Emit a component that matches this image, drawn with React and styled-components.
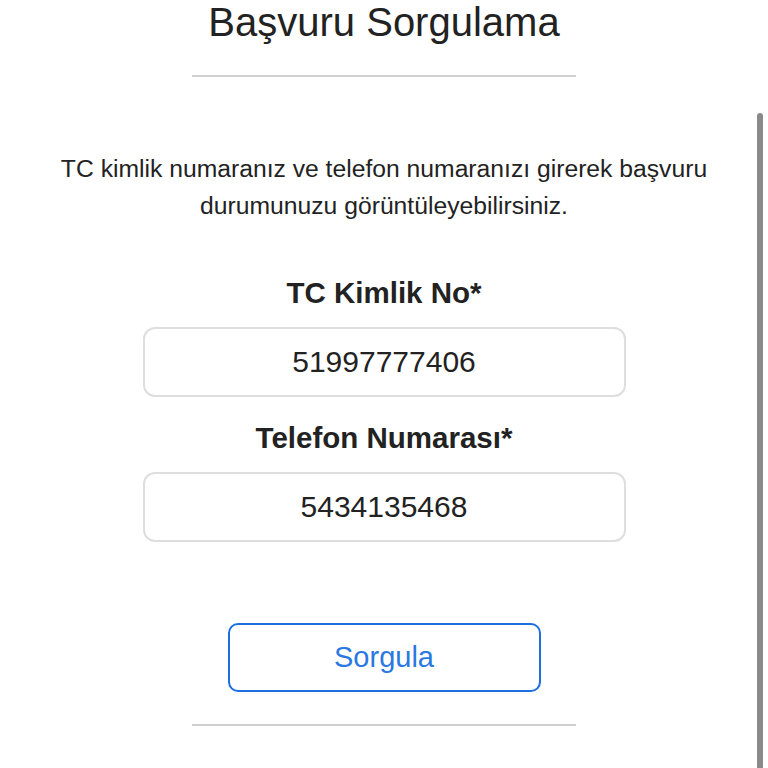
import React from "react";
import styled, { createGlobalStyle } from "styled-components";

const Global = createGlobalStyle`
  html, body { margin: 0; padding: 0; background: #ffffff; }
  body { font-family: "Liberation Sans", Arial, Helvetica, sans-serif; color: #222; }
  * { box-sizing: border-box; }
`;

const Page = styled.main`
  position: relative;
  width: 768px;
  height: 768px;
  overflow: hidden;
  display: flex;
  flex-direction: column;
  align-items: center;
`;

const Title = styled.h1`
  margin: 0;
  font-size: 40px;
  line-height: 44px;
  font-weight: 400;
  color: #222;
`;

const Divider = styled.hr`
  width: 384px;
  height: 2px;
  margin: ${(p) => p.$top}px 0 0;
  border: none;
  background: #cfcfcf;
  flex-shrink: 0;
`;

const Intro = styled.p`
  margin: 73px 0 0;
  max-width: 680px;
  text-align: center;
  font-size: 24.7px;
  line-height: 37px;
  color: #222;
`;

const Form = styled.form`
  display: flex;
  flex-direction: column;
  align-items: center;
`;

const Label = styled.label`
  display: block;
  margin-top: ${(p) => p.$top}px;
  font-size: 29.5px;
  line-height: 36px;
  font-weight: 700;
  color: #222;
`;

const Field = styled.input`
  display: block;
  margin-top: 16px;
  width: 483px;
  height: 70px;
  border: 2px solid #dedede;
  border-radius: 12px;
  background: #fff;
  text-align: center;
  font-family: "Liberation Sans", Arial, sans-serif;
  font-size: 30px;
  color: #222;
  outline: none;
  padding: 0 12px;
`;

const SubmitButton = styled.button`
  margin-top: 81px;
  width: 313px;
  height: 69px;
  border: 2px solid #1d6fde;
  border-radius: 10px;
  background: #fff;
  color: #2a78e0;
  font-family: "Liberation Sans", Arial, sans-serif;
  font-size: 29px;
  cursor: pointer;
`;

const ScrollIndicator = styled.div`
  position: absolute;
  left: 757px;
  top: 113px;
  width: 6px;
  height: 700px;
  border-radius: 3px;
  background: #8a8a8a;
`;

export default function App() {
  return (
    <>
      <Global />
      <Page>
        <Title>Başvuru Sorgulama</Title>
        <Divider $top={31} />
        <Intro>
          TC kimlik numaranız ve telefon numaranızı girerek başvuru durumunuzu görüntüleyebilirsiniz.
        </Intro>
        <Form onSubmit={(e) => e.preventDefault()}>
          <Label $top={51} htmlFor="tc">TC Kimlik No*</Label>
          <Field id="tc" defaultValue="51997777406" />
          <Label $top={23} htmlFor="tel">Telefon Numarası*</Label>
          <Field id="tel" defaultValue="5434135468" />
          <SubmitButton type="submit">Sorgula</SubmitButton>
        </Form>
        <Divider $top={32} />
        <ScrollIndicator />
      </Page>
    </>
  );
}
